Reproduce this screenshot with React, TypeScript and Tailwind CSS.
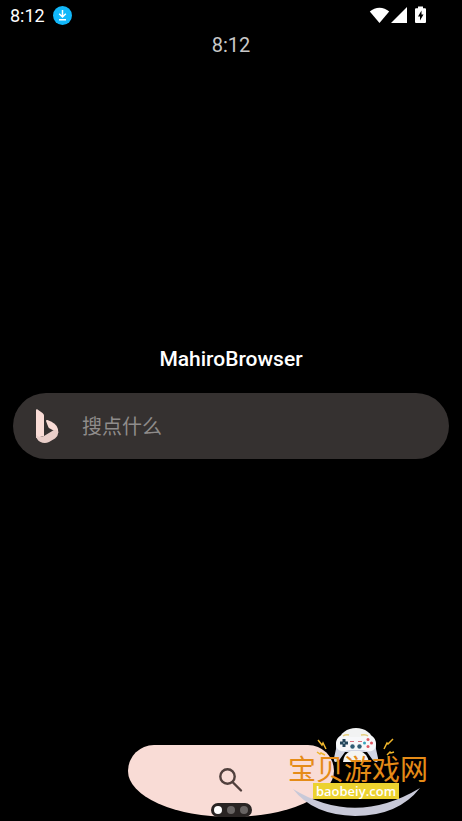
import React from "react";

function StatusBar() {
  return (
    <header className="flex h-8 items-center justify-between pl-[10px] pr-[35px]">
      <div className="flex items-center gap-2">
        <time className="text-[18px] leading-6">8:12</time>
        <svg className="size-5" viewBox="0 0 20 20" aria-hidden="true">
          <circle cx="9.500" cy="9.500" r="9.500" fill="#12b8fa" />
          <path d="M9.500 4v7M6.200 7.800 9.500 11l3.300-3.200M6 13.700h7" fill="none" stroke="#fff" strokeWidth="1.500" />
        </svg>
      </div>
      <svg className="h-5 w-[58px]" viewBox="0 0 58 20" fill="#fff" aria-hidden="true">
        <path d="M.8 5.6C6.2.5 14.8.5 20.2 5.6L10.5 17Z" />
        <path d="M38 1v16H22Z" />
        <path d="M47 2.200h2V.5h5v1.700h2q1 0 1 1V16q0 1-1 1h-9q-1 0-1-1V3.200q0-1 1-1Z" />
        <path d="m52.500 4.500-3.500 6h2v4l3.500-6h-2Z" fill="#000" />
      </svg>
    </header>
  );
}

function BingIcon() {
  return (
    <svg className="h-[34px] w-6 shrink-0" viewBox="0 0 24 34" aria-hidden="true">
      <path d="M1 1.200Q1 0 2.200.3L7.500 4Q9 5 9 6.500V27L1 29Z" fill="#f9dcd6" />
      <path d="M11 12q0-1.500 1.500-1l4 1.700Q23.500 16 23.300 23.500L18.500 21.500 14.800 19.500q-1-.6-1.500-1.600Z" fill="#f9dcd6" />
      <path d="M9 27 18.500 21.200Q23.500 19.500 23.300 23.500 23 27.500 20 29.500L14 33Q9.500 35 5 32.700 1 30.500 1 25.500Q3 29.500 9 27Z" fill="#e9cec9" />
    </svg>
  );
}

function Watermark() {
  return (
    <div className="pointer-events-none absolute right-[34px] bottom-0 h-[96px] w-[140px]">
      <svg className="absolute inset-0 h-full w-full" viewBox="288 725 140 96" aria-hidden="true">
        <path d="M293 789Q355 827 420 788 398 816 355 816 313 815 293 789Z" fill="#c8c9d8" />
        <path d="M338 742c2-9 9-14 18-14s16 5 18 14l-5 8h-26Z" fill="#f2f3f3" />
        <path d="M344 736c-7 0-8 6-8 13l-2 9c-1 5 3 5 6 1l5-7h22l5 7c3 4 7 4 6-1l-2-9c0-7-1-13-8-13-3 0-4 2-7 2H351c-3 0-4-2-7-2Z" fill="#d2d5e3" />
        <path d="M344 735c-5 0-8 4-8 9 0 6 5 8 9 7l4-1h14l4 1c5 1 9-1 9-7 0-5-3-9-8-9-3 0-4 2-7 2H351c-3 0-4-2-7-2Z" fill="#f7f8fa" />
        <path d="M343 762q1-9 8-11h9q7 2 9 11Z" fill="#f4f4f2" />
        <path d="M344 739v8M340 743h8" stroke="#24465b" strokeWidth="3" />
        <circle cx="344" cy="743" r="1" fill="#84a6b5" />
        <circle cx="368" cy="739.500" r="1.500" fill="#df5862" />
        <circle cx="368" cy="746.500" r="1.500" fill="#df5862" />
        <circle cx="364.500" cy="743" r="1.500" fill="#37a4bd" />
        <circle cx="371.500" cy="743" r="1.500" fill="#df5862" />
        <circle cx="352.500" cy="746.500" r="2.200" fill="#315d75" />
        <circle cx="359.500" cy="746.500" r="2.200" fill="#315d75" />
        <path d="M350 741.500h4M358 741.500h4" stroke="#d77380" />
        <path d="M343 736q3-2 6-1M361 735q5-1 7 1" fill="none" stroke="#e5ce7c" strokeWidth="1.500" />
        <path d="m318 740 4 5 1-2 3 6M393 739l-5 5-1-1-3 6M317 752l3 2 1-1 4 2M394 752l-3 1-1-1-3 3" fill="none" stroke="#efb52c" strokeWidth="1.500" />
      </svg>
      <div className="absolute inset-x-0 top-[29px] text-center font-['Noto_Sans_CJK_SC',sans-serif] text-[28px] leading-7 whitespace-nowrap text-[#e58b17]">
        宝贝游戏网
      </div>
      <div className="absolute top-[58px] left-[25px] flex h-4 w-[86px] items-center justify-center bg-[#ecd22f] font-['Open_Sans',sans-serif] text-[13px] leading-4 font-semibold text-white">
        baobeiy.com
      </div>
    </div>
  );
}

export default function App() {
  return (
    <div className="relative flex min-h-screen flex-col overflow-hidden bg-black font-['Roboto','Noto_Sans_CJK_SC',sans-serif] text-white">
      <StatusBar />
      <time className="text-center text-[20px] leading-[26px] text-[#c8c8c8]">8:12</time>
      <main className="flex flex-1 flex-col items-center justify-center px-[13px]">
        <h1 className="text-[21px] leading-7 font-medium">MahiroBrowser</h1>
        <label className="mt-5 flex h-[66px] w-full items-center gap-[23px] rounded-full bg-[#353130] px-[22px]">
          <BingIcon />
          <input
            type="text"
            aria-label="搜点什么"
            placeholder="搜点什么"
            className="min-w-0 flex-1 bg-transparent font-['Noto_Sans_CJK_SC',sans-serif] text-[20px] leading-7 outline-none placeholder:text-[#8f8c8b]"
          />
        </label>
      </main>
      <footer className="flex justify-center pb-1">
        <button
          type="button"
          aria-label="搜索"
          className="relative flex h-[72px] w-[206px] items-center justify-center rounded-[26px_26px_103px_103px/26px_26px_46px_46px] bg-[#f9dcd6]"
        >
          <svg className="h-6 w-6 overflow-visible" viewBox="0 0 24 24" fill="none" stroke="#51403d" strokeWidth="2.400" strokeLinecap="round" aria-hidden="true">
            <circle cx="8.500" cy="7.500" r="7.200" />
            <path d="m13.500 13 8.500 8.500" />
          </svg>
          <span className="absolute bottom-0 flex h-[14px] w-[41px] items-center justify-center gap-[5px] rounded-full bg-[#292423]">
            <span className="size-2 rounded-full bg-white" />
            <span className="size-2 rounded-full bg-[#686463]" />
            <span className="size-2 rounded-full bg-[#686463]" />
          </span>
        </button>
      </footer>
      <Watermark />
    </div>
  );
}
